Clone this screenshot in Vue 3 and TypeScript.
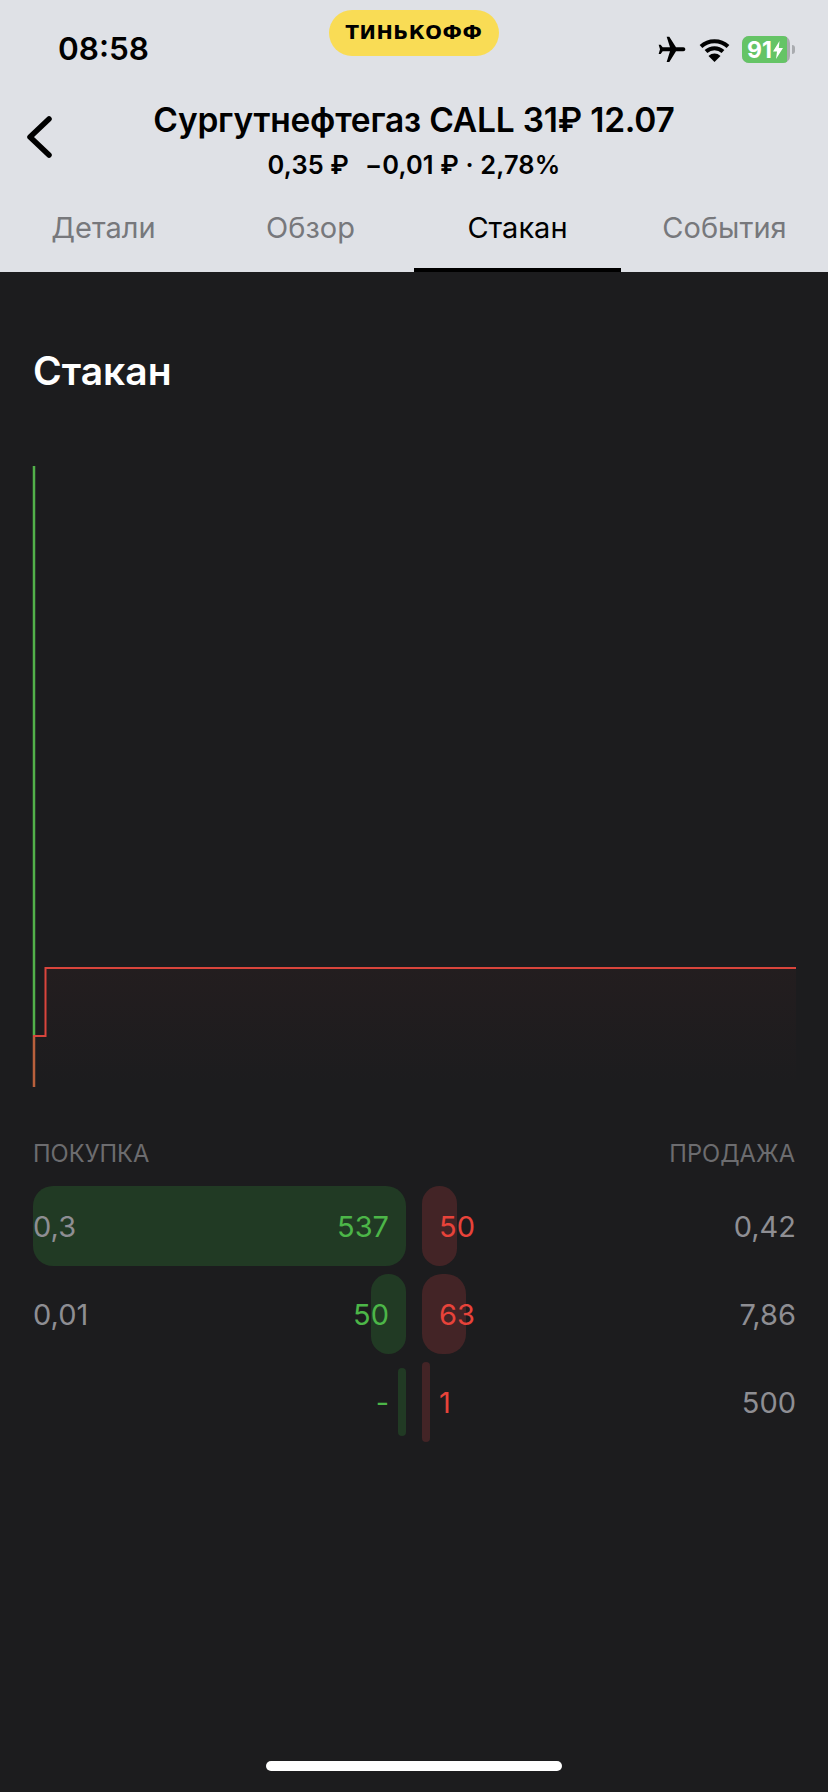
<script setup lang="ts">
interface Row { bidPrice: string; bid: string; bidW: number; bidH: number; ask: string; askW: number; askH: number; askPrice: string }
const rows: Row[] = [
  { bidPrice: '0,3', bid: '537', bidW: 373, bidH: 80, ask: '50', askW: 35, askH: 80, askPrice: '0,42' },
  { bidPrice: '0,01', bid: '50', bidW: 35, bidH: 80, ask: '63', askW: 44, askH: 80, askPrice: '7,86' },
  { bidPrice: '', bid: '-', bidW: 8, bidH: 68, ask: '1', askW: 8, askH: 80, askPrice: '500' },
]
const tabs = ['Детали', 'Обзор', 'Стакан', 'События']
</script>

<template>
  <div class="page">
    <header class="head">
      <div class="status">
        <span class="time">08:58</span>
        <span class="pill">ТИНЬКОФФ</span>
        <div class="sys">
          <svg class="plane" width="32" height="32" viewBox="0 0 24 24"><path transform="rotate(90 12 12)" d="M21 16v-2l-8-5V3.500c0-.83-.67-1.500-1.500-1.500S10 2.670 10 3.500V9l-8 5v2l8-2.500V19l-2 1.500V22l3.500-1 3.500 1v-1.500L13 19v-5.500l8 2.500z" fill="#000"/></svg>
          <svg class="wifi" width="31" height="24" viewBox="0 0 31 24"><path d="M2 8.500C9.500 1.500 21.500 1.500 29 8.500M7 13.500C11.800 9 19.200 9 24 13.500" fill="none" stroke="#000" stroke-width="4"/><path d="M15.500 24 9.500 18C13 14.700 18 14.700 21.500 18Z" fill="#000"/></svg>
          <div class="batt"><span class="level"></span><span class="pct">91<svg width="10" height="18" viewBox="0 0 10 18"><path d="M6.500 0 0 10.500h4L3 18l7-11H5.800Z" fill="#fff"/></svg></span></div>
          <span class="tip"></span>
        </div>
      </div>
      <div class="nav">
        <svg class="back" width="28" height="42" viewBox="0 0 28 42"><path d="M24 3 5 21l19 18" fill="none" stroke="#000" stroke-width="5.500" stroke-linecap="round" stroke-linejoin="round"/></svg>
        <div class="titles">
          <div class="title">Сургутнефтегаз CALL 31₽ 12.07</div>
          <div class="sub"><span>0,35 ₽</span><span>−0,01 ₽ · 2,78%</span></div>
        </div>
      </div>
      <nav class="tabs">
        <div v-for="(t, i) in tabs" :key="t" class="tab" :class="{ active: i === 2 }">{{ t }}</div>
      </nav>
    </header>

    <main class="body">
      <h2 class="h">Стакан</h2>
      <svg class="chart" width="828" height="640" viewBox="0 0 828 640">
        <defs>
          <linearGradient id="rf" x1="0" y1="0" x2="0" y2="1">
            <stop offset="0" stop-color="#e8433a" stop-opacity=".035"/>
            <stop offset="1" stop-color="#e8433a" stop-opacity="0"/>
          </linearGradient>
        </defs>
        <path d="M34 623V572H45.500V504H796V623Z" fill="url(#rf)"/>
        <path d="M34 2V572" fill="none" stroke="#52b04a" stroke-width="2.500"/>
        <path d="M34 623V572" fill="none" stroke="#b9603c" stroke-width="2.500"/>
        <path d="M33 572H45.500V504H796" fill="none" stroke="#d9453c" stroke-width="2"/>
      </svg>

      <div class="labels"><span>ПОКУПКА</span><span>ПРОДАЖА</span></div>
      <div class="book">
        <div v-for="r in rows" :key="r.askPrice" class="row">
          <div class="side">
            <span class="bar buy" :style="{ width: r.bidW + 'px', height: r.bidH + 'px' }"></span>
            <span class="price">{{ r.bidPrice }}</span>
            <span class="qty green">{{ r.bid }}</span>
          </div>
          <div class="side right">
            <span class="bar sell" :style="{ width: r.askW + 'px', height: r.askH + 'px' }"></span>
            <span class="qty red">{{ r.ask }}</span>
            <span class="price">{{ r.askPrice }}</span>
          </div>
        </div>
      </div>
    </main>
    <div class="home"></div>
  </div>
</template>

<style>
html, body { margin: 0; background: #1c1c1e; }
</style>

<style scoped>
.page {
  width: 828px; height: 1792px; display: flex; flex-direction: column;
  background: #1c1c1e; font-family: Inter, "Noto Sans", sans-serif; overflow: hidden;
}
.head { background: #dfe1e6; height: 272px; box-sizing: border-box; color: #000; }
.status { display: grid; grid-template-columns: 1fr 170px 1fr; height: 72px; padding-top: 10px; box-sizing: border-box; }
.time { font-size: 31.500px; font-weight: 600; padding: 21px 0 0 58px; line-height: 36px; }
.pill {
  height: 46px; border-radius: 23px; background: #f9dc55; text-align: center;
  font: 800 19.500px/46px "DejaVu Sans", sans-serif; letter-spacing: .6px;
}
.sys { display: flex; align-items: center; justify-content: flex-end; height: 54px; padding: 25px 33px 0 0; box-sizing: border-box; }
.plane { margin-right: 11px; }
.wifi { margin-right: 12px; }
.batt { position: relative; width: 48px; height: 27px; border-radius: 7px; background: #a9abaf; overflow: hidden; }
.level { position: absolute; inset: 0 3px 0 0; background: #65c466; }
.pct { position: absolute; inset: 0; display: flex; align-items: center; padding-left: 5px; color: #fff; font-size: 23px; font-weight: 700; gap: 1px; }
.tip { width: 3px; height: 9px; margin-left: 2px; border-radius: 0 3px 3px 0; background: #a9abaf; }
.nav { height: 134px; box-sizing: border-box; position: relative; padding-top: 28px; }
.back { position: absolute; left: 25px; top: 44px; }
.titles { text-align: center; }
.title { font-size: 33.500px; font-weight: 600; line-height: 40px; letter-spacing: -.2px; }
.sub { display: flex; justify-content: center; gap: 16px; font-size: 25.400px; font-weight: 600; line-height: 34px; margin-top: 8px; letter-spacing: .15px; }
.tabs { display: grid; grid-template-columns: repeat(4, 207px); }
.tab { height: 66px; box-sizing: border-box; text-align: center; font-size: 29px; line-height: 40px; color: #77787c; padding-top: 2px; }
.tab.active { color: #000; border-bottom: 4px solid #000; }
.body { padding: 0 33px; flex: 1; }
.h { margin: 0; padding-top: 76px; font-size: 39px; font-weight: 600; line-height: 46px; color: #fff; }
.chart { display: block; margin: 70px 0 0 -33px; }
.labels { display: flex; justify-content: space-between; font-size: 23.700px; line-height: 28px; color: #6c6c6f; margin-top: 36px; }
.book { margin-top: 18px; display: flex; flex-direction: column; gap: 8px; }
.row { display: grid; grid-template-columns: 373px 373px; gap: 16px; height: 80px; }
.side { position: relative; display: flex; align-items: center; justify-content: space-between; font-size: 29px; }
.bar { position: absolute; top: 50%; transform: translateY(-50%); border-radius: 20px; }
.bar.buy { right: 0; background: #213a24; }
.bar.sell { left: 0; background: #432426; }
.side span:not(.bar) { position: relative; }
.price { color: #8e8e93; }
.right .price { margin-right: -1px; }
.qty.green { color: #4cb648; margin-right: 17px; }
.qty.red { color: #e8433a; margin-left: 17px; }
.home { width: 296px; height: 10px; border-radius: 5px; background: #fff; margin: 0 auto 21px; }
</style>
